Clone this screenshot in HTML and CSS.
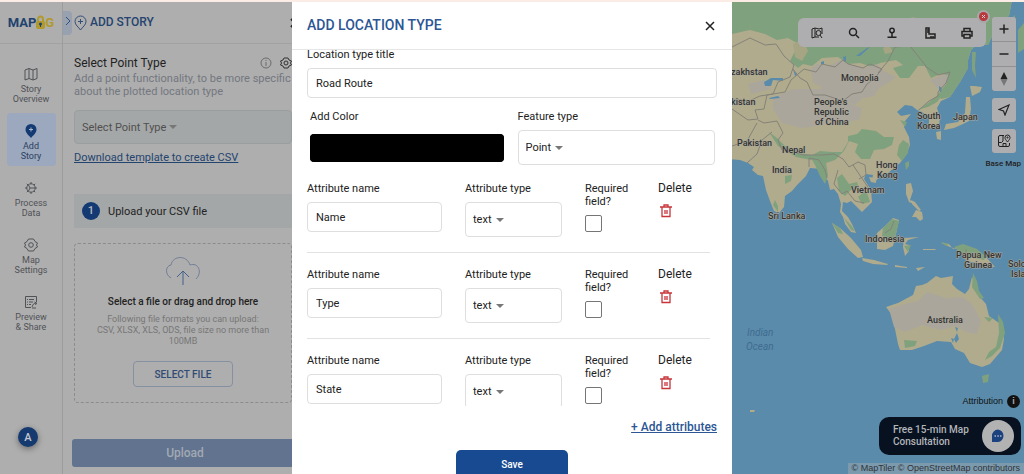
FILE: index.html
```html
<!DOCTYPE html>
<html lang="en">
  <head>
    <meta charset="UTF-8" />
    <meta name="viewport" content="width=device-width, initial-scale=1" />
    <title>Add Location Type</title>
    <link rel="stylesheet" href="styles.css">
  </head>
  <body>
    <div class="app">
      <nav class="sidebar">
        <div class="logo">
          MAP<svg width="9" height="15" viewBox="0 0 9 15"><path d="M2 7V4a2.500 2.500 0 0 1 5 0v3" fill="none" stroke="#b19a2c" stroke-width="2"/><rect y="6" width="9" height="8" rx="2" fill="#b19a2c"/><circle cx="4.500" cy="9" r="1.500" fill="#22426e"/><path d="M4 9h1v3H4z" fill="#22426e"/></svg><span>G</span>
        </div>
        <a class="nav-item" href="#">
          <svg width="14" height="14" viewBox="0 0 14 14"><path d="M1 3l4-1.500 4 1.500 4-1.500v10L9 13l-4-1.500L1 13zM5 1.500v10M9 3v10"/></svg>
          Story<br>Overview
        </a>
        <a class="nav-item active" href="#">
          <svg width="14" height="14" viewBox="0 0 14 14"><path class="solid" d="M7 0a5.500 5.500 0 0 0-5.500 5.500C1.500 9 5 11.500 7 14c2-2.500 5.500-5 5.500-8.500A5.500 5.500 0 0 0 7 0z"/><path class="plus" d="M7 3.500v4M5 5.500h4"/></svg>
          Add<br>Story
        </a>
        <a class="nav-item" href="#">
          <svg width="14" height="14" viewBox="0 0 14 14"><circle cx="7" cy="7" r="4.200"/><path d="M7 1v2M7 11v2M1 7h2M11 7h2M2.800 2.800L4 4M10 10l1.200 1.200M2.800 11.200L4 10M10 4l1.200-1.200M6 7h5M6 7L4.500 4M6 7l-1.500 3"/></svg>
          Process<br>Data
        </a>
        <a class="nav-item" href="#">
          <svg width="14" height="14" viewBox="0 0 14 14"><path d="M4.500 1h5L11 3.500 13.500 5l-1 2 1 2-2.500 1.500L9.500 13h-5L3 10.500.5 9l1-2-1-2L3 3.500z" stroke-linejoin="round"/><circle cx="7" cy="7" r="2.300"/></svg>
          Map<br>Settings
        </a>
        <a class="nav-item" href="#">
          <svg width="14" height="14" viewBox="0 0 14 14"><path d="M7 12.500H1.500v-11h11V7M5 4.500h5M5 7h4M5 9.500h2M3 4.500h1M3 7h1M3 9.500h1M8 12c1-3 2-4 4.500-4M10.500 7l2 1-1 2M8 13h4"/></svg>
          Preview<br>&amp; Share
        </a>
        <button class="avatar" type="button">A</button>
      </nav>

      <section class="panel">
        <header class="panel-header">
          <button class="collapse" type="button" aria-label="Collapse">
            <svg width="6" height="10" viewBox="0 0 6 10"><path d="M1 1l4 4-4 4"/></svg>
          </button>
          <svg class="pin" width="13" height="16" viewBox="0 0 13 16"><path d="M6.500 1A5.500 5.500 0 0 0 1 6.500C1 10 4.500 12 6.500 15c2-3 5.500-5 5.500-8.500A5.500 5.500 0 0 0 6.500 1zM6.500 4v5M4 6.500h5"/></svg>
          <h1>ADD STORY</h1>
          <svg class="panel-close" width="10" height="10" viewBox="0 0 10 10"><path d="M1 1l8 8M9 1L1 9"/></svg>
        </header>
        <div class="panel-body">
          <div class="title-row">
            <label for="point-type">Select Point Type</label>
            <svg width="12" height="12" viewBox="0 0 12 12" stroke="#6a6b6e"><circle cx="6" cy="6" r="5"/><path d="M6 5v4M6 3v1"/></svg>
            <svg width="12" height="12" viewBox="0 0 12 12" stroke="#333"><path d="M4 1h4l1 2 2.500 1-1 2 1 2L9 9l-1 2H4L3 9 .5 8l1-2-1-2L3 3z"/><circle cx="6" cy="6" r="2"/></svg>
          </div>
          <p class="hint">Add a point functionality, to be more specific about the plotted location type</p>
          <select id="point-type" class="point-select">
            <option>Select Point Type</option>
          </select>
          <a class="template-link" href="#">Download template to create CSV</a>
          <div class="step"><span class="step-number">1</span>Upload your CSV file</div>
          <div class="dropzone">
            <svg width="36" height="30" viewBox="0 0 36 30"><path d="M6 22C0 19 0 10 6 9 8-1 22-1 25 9c8-3 13 7 6 14" stroke="#727e98"/><path d="M18 29V15M12 21l6-6 6 6" stroke="#44608c"/></svg>
            <strong>Select a file or drag and drop here</strong>
            <p>Following file formats you can upload:<br>CSV, XLSX, XLS, ODS, file size no more than<br>100MB</p>
            <button class="select-file" type="button">SELECT FILE</button>
          </div>
        </div>
        <button class="upload" type="button">Upload</button>
      </section>

      <main class="map">
        <svg class="map-canvas" viewBox="303 2 721 472" preserveAspectRatio="xMaxYMid slice">
          <!-- mainland -->
          <path class="land" d="M300 0H1012L1009 16 1000 20 988 45 978 44 971 50 968 60 968 68 960 82 950 97 941 101 937 108 940 117 939 126 934 129 929 127 929 117 922 112 917 110 912 106 905 105 897 112 901 116 911 114 905 121 904 127 909 137 910 145 906 155 900 163 888 173 880 175 876 181 872 181 873 175 866 174 864 179 871 190 872 202 862 212 856 206 851 201 847 203 843 202 842 211 848 217 852 224 856 233 851 232 845 224 843 217 840 212 841 204 838 194 834 189 830 190 828 181 824 175 821 169 810 168 806 176 797 185 792 191 785 196 784 207 779 213 774 211 770 201 766 190 763 176 758 175 752 170 754 167 748 163 740 160 728 159H300z"/>
          <path class="green" d="M300 0H1012L1009 16 1000 20 988 45 978 44 971 50 968 60 968 68 960 82 950 97 941 99 939 94 945 88 949 75 940 74 931 78 925 66 918 66 909 78 900 78 893 68 903 65 896 60 880 63 872 67 860 63 848 64 838 57 822 58 812 66 803 64 798 68 790 61 794 53 802 46 788 38 777 40 765 34 750 30 732 34 300 30z"/>
          <path class="tan" d="M899 20l16-3-8 10zM883 48l6-3 4 7-8 2zM816 37l8 2-2 7-6-2zM793 44l10-5 5 12-6 10-7-4z"/>
          <!-- forest belts -->
          <path class="green" d="M769 132l8 6 8 8 20 8 12 2-1 5-20-4-18-11zM810 156l10-5 12 1 10 0 6-10 0-6 9-2 5-5 14 2 8 6 10 0-2 8-8 4-10 1-4 9-9 0-6-7 3-8-9-3-5 10-9 9-9 3 2 12-3 9-5-8-5-11zM903 140l6 4-1 9-6 8-5-6 2-10zM917 110l7-4 12-9 6-8 5-6 3 8-10 7-3 4-9 5z"/>
          <path class="pale" d="M811 69l6-5 12 2 12-6 7 4 17 4 12-4 3 5 16 8-8 6-9 5-5 8-11 2-8 7-17-6-12-1-6-12-7-3zM773 98l20-9 30 0 21 13 18 6-3 12-26 3-31 5-20-5-9-14zM748 84l16-4 7 9-20 5zM930 80l14-5 5 0-4 10-8 3z"/>
          <path class="green" d="M858 197l8-7 4 12-8 2zM785 176l7-1-1 6-6 3zM900 120l7 2-2 5zM857 45l15-5 2 4-12 7zM1024 23l-6 7 0 23 6-4zM775 200l3 6 0 6-5-7zM837 178l5-4 7 10 8-2 2 6-8 2-6 6-6-5z"/>
          <!-- lakes -->
          <path class="sea" d="M764 82l7-4 12 0 0 3-10-1-2 6-6 0zM769 98l9-2 2 2-10 1zM856 56l11-8 3-1-10 9zM793 69l4 6-2 1zM843 57l3-1 0 5-2 1zM821 62l3-1 0 3-3 0zM939 86l3 2-1 4-2-1z"/>
          <!-- islands -->
          <path class="land" d="M970 86l2 10 8-4 2-5-8-1zM966 97l4 0 1 12-2 12-6 3-9 4-10 2 2-6 12-2 7-9zM936 132l5-1 0 9-4-1zM832 223l8 5 11 10 10 12 2 7-5 1-10-9-10-12zM862 258l12 2 14 4-1 1-14-1-10-3zM877 233l8-7 8-8 6 2-3 14-3 12-8 4-8-1zM904 238l15-1-11 3-3 4 4 1 0 6-4 5-2-9zM941 243l8 1 4 5 8-4 15 4 9 7 10 11-9-1-8-3-12-2-6-11-10-3zM906 184l5-1 2 8-3 9 4 4-5-2-3-8zM916 210l6 2 1 7-3 2-4-4-4 0zM895 265l12 2 0 1-12-1zM916 268l9 -1-7 4zM923 249l13 0-1 1-12 0zM911 200l4 2 6 8-2 1-7-7zM869 177l7 1 0 5-5-1zM750 410l5 0-1 2-4 0z"/>
          <path class="green" d="M972 52l4 0-1 14 1 12-4-8zM905 163l4-2 0 5-3 4zM832 223l8 5 3 6-5-1zM844 218l7 7 4 6-4-1zM883 228l9-9 7 2-3 13-4 7-10-5zM954 247l9-3 14 5 9 8-2 3-19-4zM904 246l7-1-3 7zM1012 18l3-3 0 7zM941 242l8 2-3 2z"/>
          <path class="land" d="M886 307l12-4 15-8 3-9 6-1 5-2 9-7 5 2 12-2-1 8 5 5 8 5 4-5 3-12 4 8 3 11 7 8 3 12 13 9 2 14-2 11-12 14-8 3-12-4-6-10-9-4-4-7-14-1-13 5-12 4-12 0-2-6-3-15-3-14z"/>
          <path class="pale" d="M889 309l12-4 17-4 9-9 19 6 17-1 10 8 8 16-4 13-11-2-10-6-16 4-18-5-17 7-11-5z"/>
          <path class="green" d="M973 273l4 8 2 10 5 7-4 1-8-12zM998 314l5 8 2 11-5 15-8 8-7 4 4-8 7-5 3-14zM904 340l13 1-2 5-10 2zM982 376l7-2-1 8-5 1zM984 317l9 1-4 4z"/>
          <path class="sea" d="M955 327l3 1-1 4zM957 333l2 6-3 4-2-4zM951 338l3 1-1 4z"/>
          <!-- borders -->
          <path class="border" d="M732 47l18-9 15 7 11-1 8 12 10 9-4 12-12 5-5 12-13 2-11 5-17-2M804 69l12 3 6-8 13 3 8-7 5 4 15 4 7-4 12 5-7 9-8 6-5 8-10 2-9 7-18-6-12 0-6-13-7-4-7-9M878 73l10-12 7-14 15-1 16 20M925 66l13 9 12-3-4 11-8 9 0 4-9 5-10 9M804 69l-13 11-6 12-18 3-3 14-9 1 3 9-10 1-16-11M758 120l6 3 13-2 6 12-5 7 4 10 22 5 18 0 12-1 9 5 6 8 9-5 7 3 1 10-7 4M732 146l15-5 10-18M747 163l10-9 5-14 10-8M809 167l0-9 10 2 6 10 2 8M838 170l-4 14 8 10 5-3 8 10 9 2M853 165l8 12 9 13M885 233l6-4 3-8M966 249v13"/>
          <g class="country">
            <text x="731" y="75">zakhstan</text>
            <text x="731" y="105">kistan</text>
            <text x="737" y="146">Pakistan</text>
            <text x="782" y="153">Nepal</text>
            <text x="841" y="81">Mongolia</text>
            <text x="814" y="105">People's</text>
            <text x="814" y="115">Republic</text>
            <text x="815" y="125">of China</text>
            <text x="917" y="119">South</text>
            <text x="917" y="129">Korea</text>
            <text x="953" y="120">Japan</text>
            <text x="772" y="173">India</text>
            <text x="876" y="168">Hong</text>
            <text x="877" y="178">Kong</text>
            <text x="851" y="193">Vietnam</text>
            <text x="768" y="219">Sri Lanka</text>
            <text x="865" y="242">Indonesia</text>
            <text x="956" y="258">Papua New</text>
            <text x="964" y="268">Guinea</text>
            <text x="1008" y="267">Solomon</text>
            <text x="1011" y="277">Islands</text>
            <text x="927" y="323">Australia</text>
          </g>
          <g class="ocean">
            <text x="747" y="336">Indian</text>
            <text x="746" y="350">Ocean</text>
          </g>
        </svg>

        <div class="toolbar">
          <button type="button" aria-label="Explore"><svg width="12" height="12" viewBox="0 0 12 12"><path d="M4 10L1 11V2l3-1 4 1 3-1v6M4 1v9M8 10l-4 0" stroke-width="1"/><circle cx="7.500" cy="6" r="2.500" stroke-width="1"/><path d="M9 8l2 3" stroke-width="1"/></svg></button>
          <button type="button" aria-label="Search"><svg width="12" height="12" viewBox="0 0 12 12"><circle cx="5" cy="5" r="3.500"/><path d="M8 8l3 3"/></svg></button>
          <button type="button" aria-label="Place"><svg width="12" height="12" viewBox="0 0 12 12"><circle cx="6" cy="3.500" r="2.200"/><path d="M6 6v4M1.500 10.300h9"/></svg></button>
          <button type="button" aria-label="Measure"><svg width="12" height="12" viewBox="0 0 12 12"><path d="M2 1h3v6h6v4H2zM3 3h2M3 5h2M7 9v2M9 9v2"/></svg></button>
          <button type="button" aria-label="Print"><svg width="12" height="12" viewBox="0 0 12 12"><path d="M3 4V1.500h6V4M3 9H1V4.500h10V9H9M3 7.500h6V11H3z"/></svg></button>
          <button class="toolbar-close" type="button" aria-label="Close toolbar"><svg width="5" height="5" viewBox="0 0 5 5"><path d="M1 1l3 3M4 1L1 4"/></svg></button>
        </div>

        <div class="controls">
          <div class="control-group">
            <button type="button" aria-label="Zoom in"><svg width="12" height="12" viewBox="0 0 12 12"><path d="M6 1.500v9M1.500 6h9"/></svg></button>
            <button type="button" aria-label="Zoom out"><svg width="12" height="12" viewBox="0 0 12 12"><path d="M1.500 6h9"/></svg></button>
            <button type="button" aria-label="North"><svg width="8" height="14" viewBox="0 0 8 14"><path d="M4 0l3.500 7h-7z" fill="#222" stroke="none"/><path d="M4 14L.5 7h7z" fill="#777" stroke="none"/></svg></button>
          </div>
          <div class="control-group"><button type="button" aria-label="Locate"><svg width="12" height="12" viewBox="0 0 12 12"><path d="M1 5.500L11 1 7 11 5.500 7z" stroke-width="1.200"/></svg></button></div>
          <div class="control-group"><button type="button" aria-label="Base map"><svg width="14" height="14" viewBox="0 0 14 14"><path d="M7 1.500H3a1.500 1.500 0 0 0-1.500 1.500v8A1.500 1.500 0 0 0 3 12.500h8a1.500 1.500 0 0 0 1.500-1.500V9M1.500 8.500h3L6 7V1.500M6 12.500V9.500h3v3" stroke-width="1"/><path d="M10.500 8C9 6 8 5 8 3.500a2.500 2.500 0 0 1 5 0C13 5 12 6 10.500 8z" stroke-width="1"/><circle cx="10.500" cy="3.500" r=".6" stroke-width="1"/></svg></button></div>
          <span class="base-label">Base Map</span>
        </div>

        <div class="map-footer">
          <div class="attribution">Attribution <span class="info">i</span></div>
          <button class="consult" type="button">
            <span>Free 15-min Map<br>Consultation</span>
            <span class="chat"><svg width="14" height="14" viewBox="0 0 14 14"><path d="M7 .5A6.300 6.300 0 0 1 7 13H1V7A6.300 6.300 0 0 1 7 .5z" fill="#1c417f"/><path d="M3.500 7h1.500M6.300 7h1.500M9 7h1.500" stroke="#aab4c2" stroke-width="1.500"/></svg></span>
          </button>
          <div class="copyright">© MapTiler © OpenStreetMap contributors</div>
        </div>
      </main>
    </div>

    <div class="modal" role="dialog" aria-labelledby="modal-title">
      <header class="modal-header">
        <h2 id="modal-title">ADD LOCATION TYPE</h2>
        <button type="button" aria-label="Close"><svg width="10" height="10" viewBox="0 0 10 10"><path d="M1 1l8 8M9 1L1 9"/></svg></button>
      </header>
      <form class="modal-body">
        <div class="field">
          <label for="title">Location type title</label>
          <input id="title" type="text" value="Road Route">
        </div>
        <div class="pair">
          <div class="color-field">
            <label for="color">Add Color</label>
            <input id="color" type="color" value="#000000">
          </div>
          <div class="feature-field">
            <label for="feature">Feature type</label>
            <select id="feature" class="feature-select"><option>Point</option></select>
          </div>
        </div>
        <div class="attribute">
          <div class="col-name"><label for="name1">Attribute name</label><input id="name1" type="text" value="Name"></div>
          <div class="col-type"><label for="type1">Attribute type</label><select id="type1"><option>text</option></select></div>
          <div class="col-required"><label for="req1">Required field?</label><input id="req1" type="checkbox"></div>
          <div class="col-delete">Delete<button type="button" aria-label="Delete Name"><svg width="12" height="14" viewBox="0 0 12 14"><path d="M0 3h12M2 3v9.500h8V3M4 3V1h4v2M5 6v4M7 6v4"/></svg></button></div>
        </div>
        <div class="attribute">
          <div class="col-name"><label for="name2">Attribute name</label><input id="name2" type="text" value="Type"></div>
          <div class="col-type"><label for="type2">Attribute type</label><select id="type2"><option>text</option></select></div>
          <div class="col-required"><label for="req2">Required field?</label><input id="req2" type="checkbox"></div>
          <div class="col-delete">Delete<button type="button" aria-label="Delete Type"><svg width="12" height="14" viewBox="0 0 12 14"><path d="M0 3h12M2 3v9.500h8V3M4 3V1h4v2M5 6v4M7 6v4"/></svg></button></div>
        </div>
        <div class="attribute">
          <div class="col-name"><label for="name3">Attribute name</label><input id="name3" type="text" value="State"></div>
          <div class="col-type"><label for="type3">Attribute type</label><select id="type3"><option>text</option></select></div>
          <div class="col-required"><label for="req3">Required field?</label><input id="req3" type="checkbox"></div>
          <div class="col-delete">Delete<button type="button" aria-label="Delete State"><svg width="12" height="14" viewBox="0 0 12 14"><path d="M0 3h12M2 3v9.500h8V3M4 3V1h4v2M5 6v4M7 6v4"/></svg></button></div>
        </div>
      </form>
      <footer class="modal-footer">
        <a href="#">+ Add attributes</a>
        <button type="submit">Save</button>
      </footer>
    </div>
  </body>
</html>
```

FILE: styles.css
```css
* {
    box-sizing: border-box;
}

body {
    margin: 0;
    height: 100vh;
    overflow: hidden;
    border-top: 2px solid #fbece6;
    font-family: Roboto, "Liberation Sans", sans-serif;
    font-size: 11px;
    line-height: 13px;
    color: #222;
    background: #aeaeae;
}

button, input, select {
    font: inherit;
    color: inherit;
}

button {
    padding: 0;
    border: 0;
    background: none;
}

svg {
    fill: none;
}

h1, h2, p {
    margin: 0;
}

.app {
    display: flex;
    height: 100%;
}

/* left navigation */
.sidebar {
    display: flex;
    flex-direction: column;
    align-items: center;
    gap: 4px;
    width: 63px;
    border-right: 1px solid #9c9c9c;
}

.logo {
    display: flex;
    align-items: center;
    justify-content: center;
    width: 100%;
    height: 42px;
    margin-bottom: 8px;
    border-bottom: 1px solid #a2a2a2;
    font-size: 13px;
    font-weight: 700;
    color: #22426e;
}

.logo span {
    color: #b19a2c;
}

.nav-item {
    display: flex;
    flex-direction: column;
    align-items: center;
    width: 49px;
    height: 53px;
    padding-top: 11px;
    border-radius: 4px;
    font-size: 9px;
    line-height: 10px;
    text-align: center;
    text-decoration: none;
    color: #505256;
}

.nav-item svg {
    flex: none;
    margin-bottom: 3px;
    stroke: #505256;
}

.nav-item.active {
    background: #9ca8bd;
    color: #2b3f60;
}

.nav-item .solid {
    fill: #143a74;
    stroke: none;
}

.nav-item .plus {
    stroke: #aeb8c8;
}

.avatar {
    width: 20px;
    height: 20px;
    margin: auto 6px 27px 0;
    border-radius: 50%;
    background: #143a70;
    box-shadow: 0 2px 6px rgba(0, 0, 0, 0.4);
    font-weight: 500;
    color: #c4c8ce;
}

/* story panel */
.panel {
    display: flex;
    flex: none;
    flex-direction: column;
    width: 240px;
}

.panel-header {
    display: flex;
    align-items: center;
    height: 42px;
    padding-right: 3px;
    border-bottom: 1px solid #a2a2a2;
}

.panel-header h1 {
    flex: 1;
    margin-left: 3px;
    font-size: 12px;
    font-weight: 500;
    color: #26446f;
}

.collapse {
    width: 9px;
    height: 24px;
    margin-right: 2px;
    border-radius: 0 4px 4px 0;
    background: #98a1af;
}

.collapse svg, .pin {
    stroke: #344f78;
}

.panel-close {
    stroke: #222;
    stroke-width: 2;
}

.panel-body {
    display: flex;
    flex: 1;
    flex-direction: column;
    padding: 11px 11px 0;
}

.title-row {
    display: flex;
    align-items: center;
    gap: 8px;
    height: 16px;
    font-size: 12px;
}

.title-row label {
    flex: 1;
}

.hint {
    margin-top: 1px;
    color: #737780;
}

select {
    appearance: none;
    border: 1px solid #dedede;
    border-radius: 4px;
    background: url("data:image/svg+xml,%3Csvg xmlns='http://www.w3.org/2000/svg' width='8' height='4'%3E%3Cpath d='M0 0h8L4 4z' fill='%23777'/%3E%3C/svg%3E") 30px 50% no-repeat;
    padding: 0 7px;
}

.point-select {
    height: 34px;
    margin-top: 12px;
    border-color: #999e9e;
    background-color: #a4a7a7;
    background-position: 94px 50%;
    color: #505050;
}

.template-link {
    margin-top: 7px;
    color: #23446f;
}

.step {
    display: flex;
    align-items: center;
    gap: 8px;
    height: 34px;
    margin-top: 30px;
    padding: 0 8px;
    background: #a4a7a7;
}

.step-number {
    width: 18px;
    border-radius: 50%;
    background: #143a74;
    line-height: 18px;
    text-align: center;
    font-weight: 500;
    color: #bbb;
}

.dropzone {
    display: flex;
    flex-direction: column;
    align-items: center;
    height: 160px;
    margin-top: 15px;
    padding: 12px 10px 0;
    border: 1px dashed #8c8c8c;
    border-radius: 4px;
    font-size: 10px;
    text-align: center;
    color: #777;
}

.dropzone strong {
    margin: 9px 0 6px;
    font-weight: 500;
    color: #222;
}

.dropzone p {
    font-size: 9px;
    line-height: 11px;
}

.select-file {
    width: 100px;
    height: 26px;
    margin-top: 14px;
    border: 1px solid #8590a3;
    border-radius: 4px;
    font-weight: 500;
    color: #304b75;
}

.upload {
    flex: none;
    height: 28px;
    margin: 0 5px 7px 9px;
    border-radius: 3px;
    background: #61738e;
    font-size: 12px;
    font-weight: 500;
    color: #a2a9b4;
}

/* map */
.map {
    position: relative;
    flex: 1;
    background: #5a8bab;
}

.map-canvas {
    display: block;
    width: 100%;
    height: 100%;
}

.land {
    fill: #b0ab8d;
}

.green {
    fill: #80a17d;
}

.tan {
    fill: #a6a583;
}

.pale {
    fill: #aaa69c;
}

.sea {
    fill: #5a8bab;
}

.border {
    stroke: #84827a;
}

.country text {
    font-size: 9px;
    font-weight: 500;
    fill: #333;
    stroke: #aca99c;
    stroke-width: 1px;
    paint-order: stroke;
}

.ocean text {
    font-size: 10px;
    font-style: italic;
    fill: #3f6c8f;
}

.toolbar {
    position: absolute;
    top: 16px;
    right: 38px;
    display: flex;
    justify-content: space-around;
    align-items: center;
    width: 188px;
    height: 29px;
    border-radius: 6px;
    background: #aeaeb0;
}

.toolbar svg, .controls svg {
    display: block;
    margin: auto;
    stroke: #222;
    stroke-width: 1.5;
}

.toolbar .toolbar-close {
    position: absolute;
    top: -6px;
    right: -2px;
    width: 9px;
    height: 9px;
    border-radius: 50%;
    background: #b8393e;
    box-shadow: 0 0 0 2px #a8a8a8;
}

.toolbar .toolbar-close svg {
    stroke: #ccc;
    stroke-width: 1;
}

.controls {
    position: absolute;
    top: 15px;
    right: 8px;
    display: flex;
    flex-direction: column;
    align-items: flex-end;
    gap: 7px;
}

.control-group {
    width: 24px;
    border-radius: 3px;
    background: #aeaeb0;
}

.control-group button {
    display: block;
    width: 100%;
    height: 24px;
}

.control-group button + button {
    height: 25px;
    border-top: 1px solid #919191;
}

.base-label {
    margin: -3px -5px 0;
    font-size: 8px;
    font-weight: 500;
}

.map-footer {
    position: absolute;
    right: 0;
    bottom: 0;
    display: flex;
    flex-direction: column;
    align-items: flex-end;
}

.attribution {
    display: flex;
    align-items: center;
    gap: 4px;
    margin: 0 4px 9px;
    font-family: "Liberation Sans", sans-serif;
    font-size: 9px;
    color: #111;
}

.info {
    width: 13px;
    border-radius: 50%;
    background: #111;
    font-weight: 700;
    text-align: center;
    color: #aaa;
}

.consult {
    display: flex;
    align-items: center;
    justify-content: space-between;
    width: 142px;
    height: 38px;
    margin: 0 3px 8px;
    padding: 0 7px 0 14px;
    border-radius: 10px;
    background: #07111f;
    font-size: 10px;
    font-weight: 500;
    line-height: 12px;
    text-align: left;
    color: #b2b5ba;
}

.chat {
    display: flex;
    align-items: center;
    justify-content: center;
    width: 32px;
    height: 32px;
    border-radius: 50%;
    background: #b2b2b2;
}

.copyright {
    padding: 0 4px;
    background: #7c9aae;
    font-family: "Liberation Sans", sans-serif;
    font-size: 9px;
    line-height: 11px;
    color: #303438;
}

/* dialog */
.modal {
    position: fixed;
    top: 2px;
    bottom: 0;
    left: 50%;
    width: 440px;
    margin-left: -220px;
    overflow: hidden;
    background: #fff;
}

.modal-header {
    display: flex;
    align-items: center;
    justify-content: space-between;
    height: 48px;
    padding: 0 17px 0 15px;
    border-bottom: 1px solid #e6e6e6;
}

.modal-header h2 {
    font-size: 14px;
    font-weight: 500;
    color: #2c5694;
}

.modal-header svg {
    display: block;
    stroke: #222;
    stroke-width: 1.5;
}

.modal-body {
    height: 75vh;
    overflow: hidden;
    padding: 0 15px;
}

.field {
    margin-top: -2px;
}

.modal label {
    display: block;
}

.modal input[type="text"] {
    display: block;
    width: 100%;
    height: 30px;
    margin-top: 7px;
    padding: 0 8px;
    border: 1px solid #dedede;
    border-radius: 4px;
}

.modal select {
    display: block;
    width: 100%;
    height: 35px;
    margin-top: 7px;
}

.modal .feature-select {
    background-position: 36px 50%;
}

.pair {
    display: flex;
    gap: 10px;
    padding: 12px 2px 2px 3px;
}

.color-field, .feature-field {
    flex: 1;
}

.color-field input {
    display: block;
    width: 100%;
    height: 28px;
    margin-top: 11px;
    padding: 0;
    border: 0;
    border-radius: 4px;
    background: #000;
}

.color-field {
    padding-right: 4px;
}

/* flex: 1 leaves the padding out of the split */
.color-field, .feature-field {
    flex-basis: 50%;
}

.color-field input::-webkit-color-swatch-wrapper {
    padding: 0;
}

.color-field input::-webkit-color-swatch {
    border: 0;
    border-radius: 4px;
}

.attribute {
    display: flex;
    height: 86px;
    margin-right: 7px;
    padding-top: 15px;
    border-bottom: 1px solid #e2e2e2;
}

.col-name {
    width: 135px;
    margin-right: 23px;
}

.col-type {
    width: 97px;
    margin-right: 23px;
}

.col-required {
    width: 50px;
    margin-right: 23px;
}

.col-required input {
    display: block;
    appearance: none;
    width: 17px;
    height: 17px;
    margin: 7px 0 0;
    border: 1px solid #767676;
    border-radius: 2px;
    background: #fff;
}

.col-delete {
    font-size: 12px;
}

.col-delete button {
    display: block;
    margin: 9px 0 0 2px;
}

.col-delete svg {
    display: block;
    stroke: #c8343a;
    stroke-width: 1.3;
}

.modal-footer {
    display: flex;
    flex-direction: column;
    align-items: center;
    gap: 15px;
    padding: 14px 15px 0;
}

.modal-footer a {
    align-self: flex-end;
    font-size: 12px;
    font-weight: 500;
    line-height: 15px;
    color: #2c5694;
}

.modal-footer button {
    width: 112px;
    height: 30px;
    border-radius: 5px;
    background: #174a90;
    font-size: 10px;
    font-weight: 500;
    color: #fff;
}
```
